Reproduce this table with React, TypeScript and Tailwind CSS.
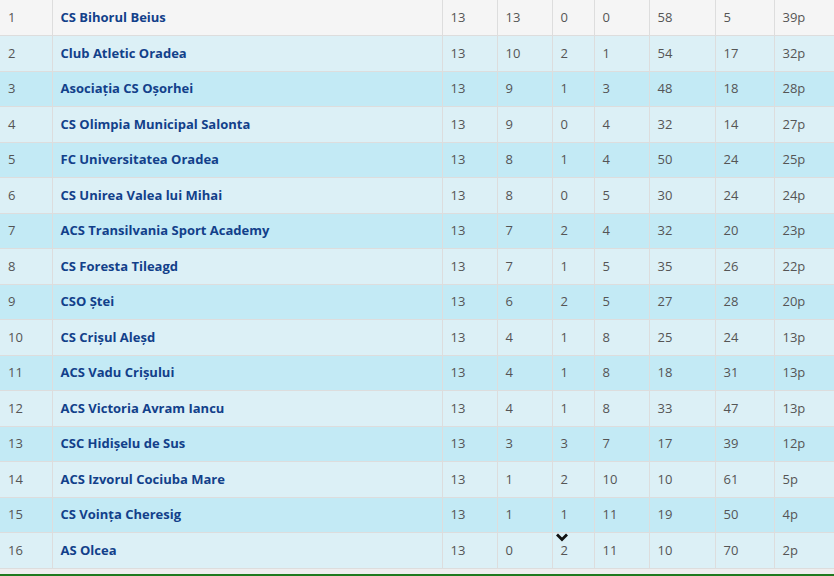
import React from "react";

type Row = [number, string, number, number, number, number, number, number, string];

const rows: Row[] = [
  [1, "CS Bihorul Beius", 13, 13, 0, 0, 58, 5, "39p"],
  [2, "Club Atletic Oradea", 13, 10, 2, 1, 54, 17, "32p"],
  [3, "Asociația CS Oșorhei", 13, 9, 1, 3, 48, 18, "28p"],
  [4, "CS Olimpia Municipal Salonta", 13, 9, 0, 4, 32, 14, "27p"],
  [5, "FC Universitatea Oradea", 13, 8, 1, 4, 50, 24, "25p"],
  [6, "CS Unirea Valea lui Mihai", 13, 8, 0, 5, 30, 24, "24p"],
  [7, "ACS Transilvania Sport Academy", 13, 7, 2, 4, 32, 20, "23p"],
  [8, "CS Foresta Tileagd", 13, 7, 1, 5, 35, 26, "22p"],
  [9, "CSO Ștei", 13, 6, 2, 5, 27, 28, "20p"],
  [10, "CS Crișul Aleșd", 13, 4, 1, 8, 25, 24, "13p"],
  [11, "ACS Vadu Crișului", 13, 4, 1, 8, 18, 31, "13p"],
  [12, "ACS Victoria Avram Iancu", 13, 4, 1, 8, 33, 47, "13p"],
  [13, "CSC Hidișelu de Sus", 13, 3, 3, 7, 17, 39, "12p"],
  [14, "ACS Izvorul Cociuba Mare", 13, 1, 2, 10, 10, 61, "5p"],
  [15, "CS Voința Cheresig", 13, 1, 1, 11, 19, 50, "4p"],
  [16, "AS Olcea", 13, 0, 2, 11, 10, 70, "2p"],
];

const widths = ["w-[52px]", "w-[390px]", "w-[55px]", "w-[55px]", "w-[42px]", "w-[55px]", "w-[66px]", "w-[59px]", "w-[60px]"];

export default function App() {
  return (
    <div
      className="relative w-[834px] h-[576px] overflow-hidden bg-[#eeeeee]"
      style={{ fontFamily: '"Open Sans", "Liberation Sans", sans-serif' }}
    >
      <table className="w-[834px] border-collapse table-fixed text-[13px]">
        <colgroup>
          {widths.map((w, i) => (
            <col key={i} className={w} />
          ))}
        </colgroup>
        <tbody>
          {rows.map((r, idx) => {
            const bg =
              idx === 0 ? "bg-[#f5f5f5]" : idx % 2 === 1 ? "bg-[#dcf0f6]" : "bg-[#c3eaf5]";
            return (
              <tr key={idx} className={`${bg} h-[35.5px]`}>
                {r.map((c, j) => (
                  <td
                    key={j}
                    className={`border-b border-[#dddddd] px-[8px] pt-0 pb-[1px] align-middle leading-[18px] ${
                      j > 0 ? "border-l" : ""
                    } ${j === 1 ? "font-bold text-[#12408a]" : "text-[#555555]"}`}
                  >
                    {c}
                  </td>
                ))}
              </tr>
            );
          })}
        </tbody>
      </table>
      <svg
        className="absolute left-[555px] top-[532px]"
        width="14"
        height="11"
        viewBox="0 0 14 11"
      >
        <path d="M2 2.5 L7 7.5 L12 2.5" fill="none" stroke="#111" strokeWidth="2.8" />
      </svg>
      <div className="absolute left-0 right-0 bottom-0 h-[2px] bg-[#1e7a1e]" />
    </div>
  );
}
